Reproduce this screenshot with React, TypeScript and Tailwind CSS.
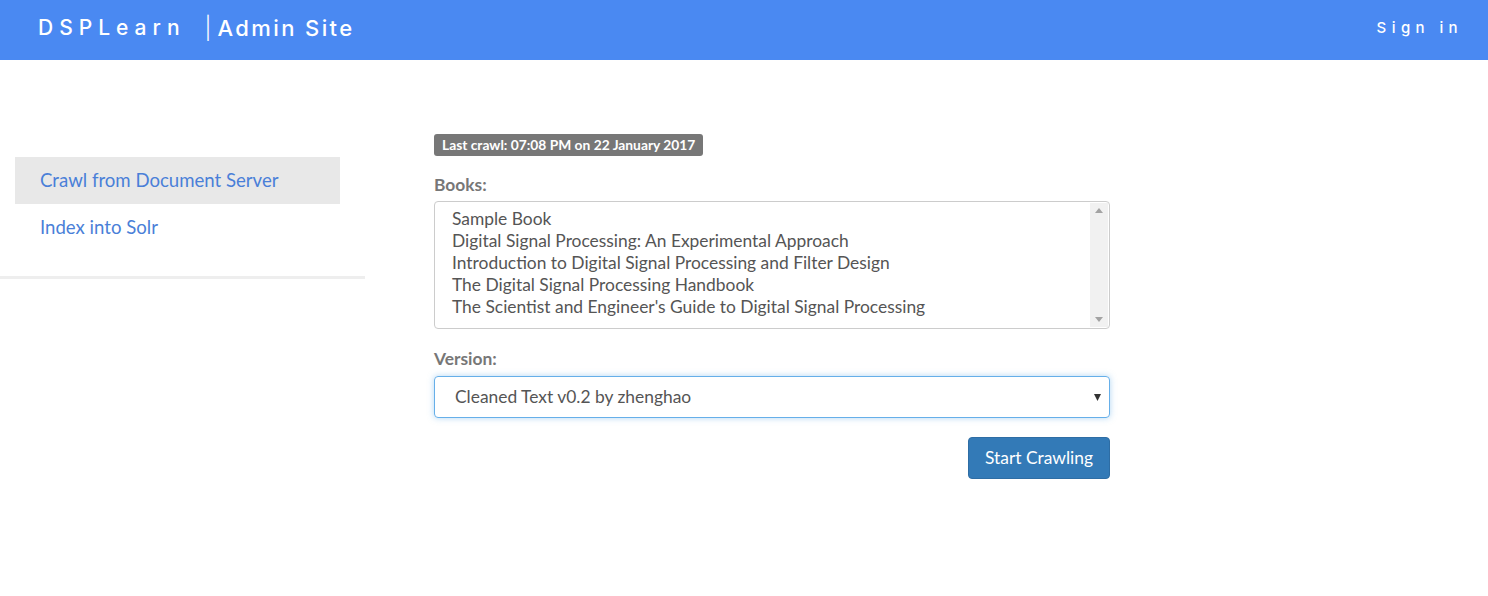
import React from "react";

const books = [
  "Sample Book",
  "Digital Signal Processing: An Experimental Approach",
  "Introduction to Digital Signal Processing and Filter Design",
  "The Digital Signal Processing Handbook",
  "The Scientist and Engineer's Guide to Digital Signal Processing",
];

export default function App() {
  return (
    <div className="min-h-[596px] bg-white font-['Lato','Liberation_Sans',sans-serif]">
      <header className="flex h-[60px] items-center justify-between bg-[#4a89f2] pb-[4px] pl-[38px] pr-[25px] text-white font-['Inter','Liberation_Sans',sans-serif]">
        <div className="flex items-center">
          <span className="text-[21px] font-medium tracking-[6px]">DSPLearn</span>
          <span className="ml-[19px] text-[22px] font-light">|</span>
          <span className="ml-[6px] text-[22px] font-medium tracking-[2.4px]">Admin Site</span>
        </div>
        <span className="text-[15px] font-medium tracking-[5.4px]">Sign in</span>
      </header>

      <div className="flex">
        <aside className="w-[365px] shrink-0 pt-[97px]">
          <nav className="ml-[15px] w-[325px]">
            <div className="flex h-[47px] items-center bg-[#e8e8e8] pl-[25px] text-[18.6px] text-[#4a7fd8]">
              Crawl from Document Server
            </div>
            <div className="flex h-[47px] items-center pl-[25px] text-[18.6px] text-[#4a7fd8]">
              Index into Solr
            </div>
          </nav>
          <div className="mt-[25px] h-[3px] bg-[#eeeeee]" />
        </aside>

        <main className="ml-[69px] w-[676px] pt-[74px]">
          <div className="flex h-[22px] w-fit items-center rounded-[3px] bg-[#777777] px-[8px] text-[13.8px] font-bold text-white">
            Last crawl: 07:08 PM on 22 January 2017
          </div>

          <div className="mt-[17px] text-[17.4px] font-bold leading-[24px] text-[#777777]">Books:</div>
          <div className="mt-[4px] flex h-[128px] rounded-[4px] border border-[#cccccc] bg-white">
            <div className="flex-1 pl-[17px] pt-[6px] text-[17.4px] leading-[22px] text-[#555555]">
              {books.map((b) => (
                <div key={b}>{b}</div>
              ))}
            </div>
            <div className="my-[1px] mr-[1px] flex w-[18px] flex-col items-center justify-between bg-[#f1f1f1] py-[5px]">
              <svg width="8" height="5" viewBox="0 0 8 5"><path d="M0 5 L4 0 L8 5 Z" fill="#a3a3a3" /></svg>
              <svg width="8" height="5" viewBox="0 0 8 5"><path d="M0 0 L4 5 L8 0 Z" fill="#a3a3a3" /></svg>
            </div>
          </div>

          <div className="mt-[18px] text-[17.4px] font-bold leading-[24px] text-[#777777]">Version:</div>
          <div className="mt-[5px] flex h-[42px] items-center justify-between rounded-[4px] border border-[#66afe9] pl-[20px] pr-[8px] text-[17.4px] text-[#555555] shadow-[0_0_6px_rgba(102,175,233,0.5)]">
            <span>Cleaned Text v0.2 by zhenghao</span>
            <svg width="7" height="8" viewBox="0 0 7 8"><path d="M0 1 L7 1 L3.5 8 Z" fill="#333333" /></svg>
          </div>

          <div className="mt-[19px] flex justify-end">
            <button className="h-[42px] rounded-[4px] border border-[#2e6da4] bg-[#337ab7] px-[16px] text-[17.4px] text-white">
              Start Crawling
            </button>
          </div>
        </main>
      </div>
    </div>
  );
}
